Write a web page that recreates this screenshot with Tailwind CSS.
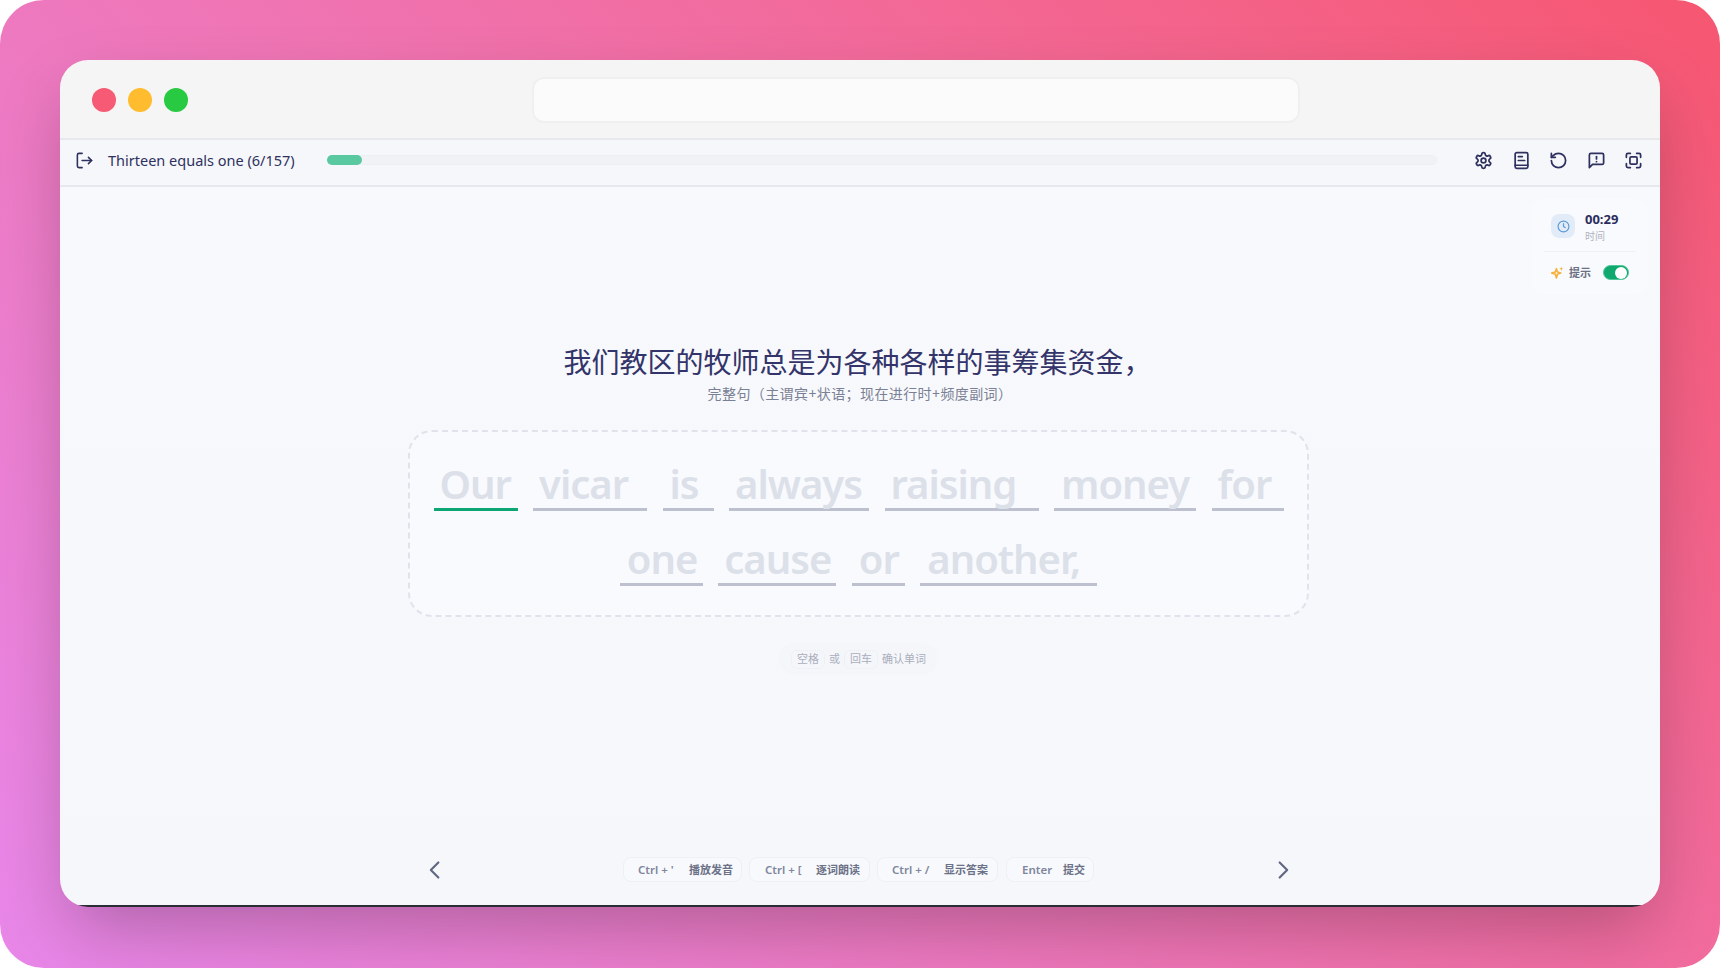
<!DOCTYPE html>
<html lang="en">
<head>
    <meta charset="UTF-8">
    <title>Thirteen equals one</title>
    <script src="https://cdn.jsdelivr.net/npm/@tailwindcss/browser@4"></script>
</head>

<body class="bg-white font-['Noto_Sans','Noto_Sans_CJK_SC',sans-serif]">
    <div class="w-[1720px] h-[968px] rounded-[44px] bg-linear-45 from-[#e887ea] to-[#f65670] pt-[60px] px-[60px] overflow-hidden">
        <!-- Window -->
        <div class="w-[1600px] h-[847px] rounded-[28px] shadow-[0_30px_70px_-10px_rgba(0,0,0,0.25)]">
            <div class="h-full rounded-[28px] overflow-hidden flex flex-col">
                <!-- Title bar -->
                <div class="h-[80px] shrink-0 bg-[#f5f5f5] border-b-2 border-[#e6e8ec] flex items-center pl-[32px] pt-[2px]">
                    <div class="flex gap-3">
                        <span class="w-6 h-6 rounded-full bg-[#f65a75]"></span>
                        <span class="w-6 h-6 rounded-full bg-[#ffbc2e]"></span>
                        <span class="w-6 h-6 rounded-full bg-[#28ca42]"></span>
                    </div>
                    <div class="ml-[344px] w-[768px] h-[46px] rounded-xl bg-[#fbfbfb] border-2 border-[#f0f0f0]"></div>
                </div>

                <!-- Toolbar -->
                <div class="h-[47px] shrink-0 bg-[#f6f7fa] border-b-2 border-[#e6e8ee] flex items-center pl-[15px] pb-[5px] text-[#2e3160]">
                    <svg class="w-[19px] h-[19px]" viewBox="0 0 24 24" fill="none" stroke="currentColor" stroke-width="2" stroke-linecap="round" stroke-linejoin="round"><path d="M9 3H5a2 2 0 0 0-2 2v14a2 2 0 0 0 2 2h4"/><path d="M9 12h12"/><path d="M17 8l4 4-4 4"/></svg>
                    <span class="ml-[14px] w-[219px] text-[14.5px] leading-5 whitespace-nowrap">Thirteen equals one (6/157)</span>
                    <div class="w-[1110px] h-[10px] rounded-full bg-[#f0f2f5] border border-[#eceff3]">
                        <div class="w-[35px] h-[10px] -mt-px -ml-px rounded-full bg-[#5ac8a0]"></div>
                    </div>
                    <div class="ml-[37px] flex gap-[18.6px]">
                        <svg class="w-[19px] h-[19px]" viewBox="0 0 24 24" fill="none" stroke="currentColor" stroke-width="2.2" stroke-linecap="round" stroke-linejoin="round"><path d="M12.22 2h-.44a2 2 0 0 0-2 2v.18a2 2 0 0 1-1 1.73l-.43.25a2 2 0 0 1-2 0l-.15-.08a2 2 0 0 0-2.73.73l-.22.38a2 2 0 0 0 .73 2.73l.15.1a2 2 0 0 1 1 1.72v.51a2 2 0 0 1-1 1.74l-.15.09a2 2 0 0 0-.73 2.73l.22.38a2 2 0 0 0 2.73.73l.15-.08a2 2 0 0 1 2 0l.43.25a2 2 0 0 1 1 1.73V20a2 2 0 0 0 2 2h.44a2 2 0 0 0 2-2v-.18a2 2 0 0 1 1-1.73l.43-.25a2 2 0 0 1 2 0l.15.08a2 2 0 0 0 2.73-.73l.22-.39a2 2 0 0 0-.73-2.73l-.15-.08a2 2 0 0 1-1-1.74v-.5a2 2 0 0 1 1-1.74l.15-.09a2 2 0 0 0 .73-2.73l-.22-.38a2 2 0 0 0-2.73-.73l-.15.08a2 2 0 0 1-2 0l-.43-.25a2 2 0 0 1-1-1.73V4a2 2 0 0 0-2-2z"/><circle cx="12" cy="12" r="3"/></svg>
                        <svg class="w-[19px] h-[19px]" viewBox="0 0 24 24" fill="none" stroke="currentColor" stroke-width="2.2" stroke-linecap="round" stroke-linejoin="round"><rect x="4" y="2" width="16" height="20" rx="2"/><path d="M4 18h16"/><path d="M8 7h5"/><path d="M8 12h8"/></svg>
                        <svg class="w-[19px] h-[19px]" viewBox="0 0 24 24" fill="none" stroke="currentColor" stroke-width="2.2" stroke-linecap="round" stroke-linejoin="round"><path d="M3 12a9 9 0 1 0 9-9 9.75 9.75 0 0 0-6.74 2.74L3 8"/><path d="M3 3v5h5"/></svg>
                        <svg class="w-[19px] h-[19px]" viewBox="0 0 24 24" fill="none" stroke="currentColor" stroke-width="2.2" stroke-linecap="round" stroke-linejoin="round"><path d="M21 15a2 2 0 0 1-2 2H7l-4 4V5a2 2 0 0 1 2-2h14a2 2 0 0 1 2 2z"/><path d="M12 7v3"/><path d="M12 13.5h.01"/></svg>
                        <svg class="w-[19px] h-[19px]" viewBox="0 0 24 24" fill="none" stroke="currentColor" stroke-width="2.2" stroke-linecap="round" stroke-linejoin="round"><path d="M3 8V5a2 2 0 0 1 2-2h3"/><path d="M16 3h3a2 2 0 0 1 2 2v3"/><path d="M21 16v3a2 2 0 0 1-2 2h-3"/><path d="M8 21H5a2 2 0 0 1-2-2v-3"/><rect x="7.5" y="7.5" width="9" height="9" rx="1.5"/></svg>
                    </div>
                </div>

                <!-- Main -->
                <div class="relative flex-1 bg-linear-to-b from-[#f8f9fc] to-[#f6f7fa] border-b-2 border-[#2a2d33] flex flex-col items-center pt-[155px] pr-[3px]">
                    <!-- Time + hint card -->
                    <div class="absolute top-[12px] right-[12px] w-[116px] h-[96px] rounded-xl bg-[#f9fafd] px-3 pt-[13px]">
                        <div class="flex items-center pl-[7px] pb-[8px] border-b border-[#eef0f5]">
                            <div class="-mt-[3px] w-6 h-6 rounded-lg bg-[#e2ecf9] flex items-center justify-center text-[#5b9bd5]">
                                <svg class="w-[13px] h-[13px]" viewBox="0 0 24 24" fill="none" stroke="currentColor" stroke-width="2.2" stroke-linecap="round" stroke-linejoin="round"><circle cx="12" cy="12" r="10"/><path d="M12 6.5V12l3 2"/></svg>
                            </div>
                            <div class="ml-[10px]">
                                <div class="text-[13px] leading-[14px] font-bold text-[#2b2d5c]">00:29</div>
                                <div class="text-[10px] leading-[14px] mt-[3px] text-[#b0b4c0]">时间</div>
                            </div>
                        </div>
                        <div class="flex items-center pl-[7px] mt-[12.5px]">
                            <svg class="w-[13px] h-[13px] text-[#f5b03c]" viewBox="0 0 24 24" fill="currentColor"><path d="M10 5l2 6 6 2-6 2-2 7-2-7-7-2 7-2z" fill="none" stroke="currentColor" stroke-width="3" stroke-linejoin="round"/><path d="M19 1l1 3 3 1-3 1-1 3-1-3-3-1 3-1z"/></svg>
                            <span class="ml-[5px] text-[11px] font-semibold leading-4 text-[#6b7084]">提示</span>
                            <div class="ml-[12px] w-[26px] h-[15px] rounded-full bg-[#0fa86f] border border-[#4fc89a] flex items-center justify-end pr-px">
                                <span class="w-3 h-3 rounded-full bg-white"></span>
                            </div>
                        </div>
                    </div>

                    <h1 class="-ml-[2px] text-[28px] leading-10 text-[#33346a] font-normal">我们教区的牧师总是为各种各样的事筹集资金，</h1>
                    <p class="mt-[2px] ml-[3px] text-sm leading-5 tracking-[0.4px] text-[#7a8095]">完整句（主谓宾+状语；现在进行时+频度副词）</p>

                    <!-- Words -->
                    <div class="mt-[26px] w-[901px] h-[187px] rounded-3xl border-2 border-dashed border-[#e0e3eb] bg-[#f9fafe] pt-[23px] flex flex-wrap justify-center content-start gap-x-[15.5px] gap-y-[19px] text-[40px] leading-[58px] tracking-[-1px] font-semibold text-[#dce0e9] px-4">
                        <div class="w-[84px] h-[56px] pl-[6px] border-b-[3px] border-[#0ba671]">Our</div>
                        <div class="w-[114px] h-[56px] pl-[6px] border-b-[3px] border-[#bcc0cf]">vicar</div>
                        <div class="w-[51px] h-[56px] pl-[7px] border-b-[3px] border-[#bcc0cf]">is</div>
                        <div class="w-[140px] h-[56px] pl-[6px] border-b-[3px] border-[#bcc0cf]">always</div>
                        <div class="w-[154px] h-[56px] pl-[6px] border-b-[3px] border-[#bcc0cf]">raising</div>
                        <div class="w-[142px] h-[56px] pl-[7px] border-b-[3px] border-[#bcc0cf]">money</div>
                        <div class="w-[72px] h-[56px] pl-[6px] border-b-[3px] border-[#bcc0cf]">for</div>
                        <div class="w-[83px] h-[56px] pl-[7px] border-b-[3px] border-[#bcc0cf]">one</div>
                        <div class="w-[118px] h-[56px] pl-[6px] border-b-[3px] border-[#bcc0cf]">cause</div>
                        <div class="w-[53px] h-[56px] pl-[7px] border-b-[3px] border-[#bcc0cf]">or</div>
                        <div class="w-[177px] h-[56px] pl-[7px] border-b-[3px] border-[#bcc0cf]">another,</div>
                    </div>

                    <!-- Confirm hint -->
                    <div class="mt-[26px] h-8 rounded-full bg-[#f5f6fa] px-3 flex items-center gap-1 text-[11px] text-[#a9aebd]">
                        <span class="w-[34px] h-[19px] rounded-md border border-dotted border-[#e6ebf4] flex items-center justify-center">空格</span>
                        <span>或</span>
                        <span class="w-[34px] h-[19px] rounded-md border border-dotted border-[#e6ebf4] flex items-center justify-center">回车</span>
                        <span>确认单词</span>
                    </div>

                    <!-- Shortcuts -->
                    <div class="mt-auto mb-[23px] w-[868px] flex items-center justify-between text-[#5f6783]">
                        <svg class="w-5 h-5" viewBox="0 0 24 24" fill="none" stroke="currentColor" stroke-width="2.6" stroke-linecap="round" stroke-linejoin="round"><path d="M16 3l-9 9 9 9"/></svg>
                        <div class="flex gap-[7px] text-[11.5px] font-semibold">
                            <div class="w-[119px] h-[25px] rounded-lg border border-[#eef0f5] bg-[#f8f9fc] flex items-center pl-[14px]"><span class="w-[51px] text-[#7f869c]">Ctrl + '</span><span class="translate-y-px text-[11px] text-[#6b7187]">播放发音</span></div>
                            <div class="w-[121px] h-[25px] rounded-lg border border-[#eef0f5] bg-[#f8f9fc] flex items-center pl-[15px]"><span class="w-[51px] text-[#7f869c]">Ctrl + [</span><span class="translate-y-px text-[11px] text-[#6b7187]">逐词朗读</span></div>
                            <div class="w-[121px] h-[25px] rounded-lg border border-[#eef0f5] bg-[#f8f9fc] flex items-center pl-[14px]"><span class="w-[52px] text-[#7f869c]">Ctrl + /</span><span class="translate-y-px text-[11px] text-[#6b7187]">显示答案</span></div>
                            <div class="ml-px w-[88px] h-[25px] rounded-lg border border-[#eef0f5] bg-[#f8f9fc] flex items-center pl-[15px]"><span class="w-[41px] text-[#7f869c]">Enter</span><span class="translate-y-px text-[11px] text-[#6b7187]">提交</span></div>
                        </div>
                        <svg class="w-5 h-5" viewBox="0 0 24 24" fill="none" stroke="currentColor" stroke-width="2.6" stroke-linecap="round" stroke-linejoin="round"><path d="M8 3l9 9-9 9"/></svg>
                    </div>
                </div>
            </div>
        </div>
    </div>
</body>
</html>
